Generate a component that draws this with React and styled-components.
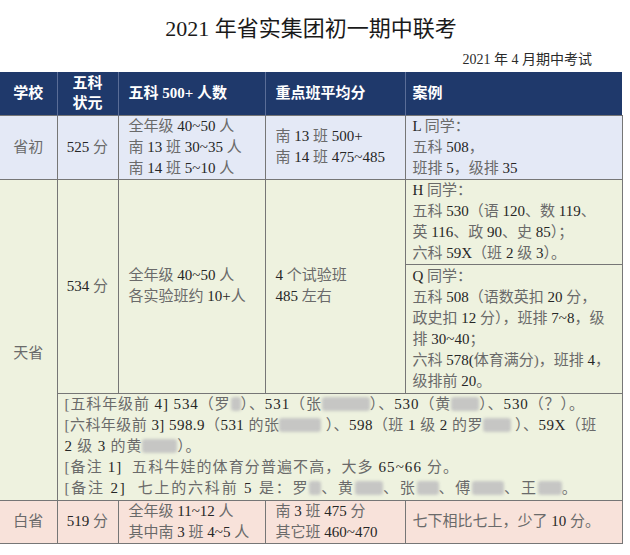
import React from "react";
import styled, { createGlobalStyle } from "styled-components";

const GlobalStyle = createGlobalStyle`
  html, body { margin: 0; padding: 0; background: #ffffff; }
  body { font-family: "Liberation Serif", "Noto Sans CJK SC", serif; }
`;

const Page = styled.div`
  width: 630px;
  height: 555px;
  overflow: hidden;
  background: #ffffff;
`;

const Title = styled.h1`
  margin: 0;
  padding-top: 15px;
  font-size: 22px;
  line-height: 28px;
  font-weight: 400;
  text-align: center;
  color: #1a1a1a;
  width: 622px;
`;

const Subtitle = styled.div`
  margin-top: 8px;
  width: 622px;
  box-sizing: border-box;
  padding-right: 30px;
  text-align: right;
  font-size: 14px;
  line-height: 18px;
  color: #2a2a2a;
`;

const Table = styled.table`
  margin-top: 3px;
  width: 622px;
  border-collapse: collapse;
  table-layout: fixed;
`;

const HeadCell = styled.th`
  background: #1f396b;
  color: #ffffff;
  font-size: 15px;
  line-height: 20px;
  font-weight: 700;
  text-align: ${(p) => p.$align || "left"};
  padding: 0 ${(p) => p.$pad ?? 10}px;
  border-left: 1px solid #5a6d97;
  white-space: nowrap;
  &:first-child { border-left: none; }
`;

const Row = styled.tr`
  height: ${(p) => p.$h}px;
  background: ${(p) => p.$bg};
`;

const Cell = styled.td`
  border: 1px solid #767676;
  font-size: 15px;
  line-height: 21px;
  color: #6a6a6a;
  text-align: ${(p) => p.$align || "left"};
  vertical-align: middle;
  padding: ${(p) => p.$top ?? 0}px 0 0 ${(p) => p.$pad ?? 10}px;
  white-space: nowrap;
  overflow: visible;
  &:first-child { border-left: none; }
`;

const Line = styled.div`
  white-space: pre;
  letter-spacing: ${(p) => p.$ls ?? 0}px;
`;

const Latin = styled.span`
  color: #262626;
`;

const Blur = styled.span`
  display: inline-block;
  width: ${(p) => p.$w}px;
  height: 14px;
  vertical-align: -2px;
  background: #c2c2c2;
  border-radius: 3px;
  filter: blur(1.6px);
  opacity: 0.9;
`;

const Col = styled.col`
  width: ${(p) => p.$w}px;
`;

function Rich({ text }) {
  return text
    .split(/([0-9A-Za-z.+~?\[\]\(\)]+)/)
    .map((s, i) =>
      /[0-9A-Za-z]/.test(s) ? <Latin key={i}>{s}</Latin> : <React.Fragment key={i}>{s}</React.Fragment>
    );
}

function Lines({ lines }) {
  return lines.map((entry, i) => {
    const obj = typeof entry === "object" && !Array.isArray(entry) ? entry : { parts: entry };
    const parts = Array.isArray(obj.parts) ? obj.parts : [obj.parts];
    return (
      <Line key={i} $ls={obj.ls}>
        {parts.map((p, j) =>
          typeof p === "number" ? <Blur key={j} $w={p} /> : <Rich key={j} text={p} />
        )}
      </Line>
    );
  });
}

const ROW1 = "#e4e9f6";
const ROW2 = "#eef2df";
const ROW3 = "#f8e2da";

export default function App() {
  return (
    <Page>
      <GlobalStyle />
      <Title>2021 年省实集团初一期中联考</Title>
      <Subtitle>2021 年 4 月期中考试</Subtitle>
      <Table>
        <colgroup>
          <Col $w={57} />
          <Col $w={61} />
          <Col $w={147} />
          <Col $w={140} />
          <Col $w={217} />
        </colgroup>
        <thead>
          <Row $h={43} $bg="#1f396b">
            <HeadCell $align="center" $pad={0}>学校</HeadCell>
            <HeadCell $align="center" $pad={0}>
              <Line>五科</Line>
              <Line>状元</Line>
            </HeadCell>
            <HeadCell>五科 500+ 人数</HeadCell>
            <HeadCell>重点班平均分</HeadCell>
            <HeadCell $pad={7}>案例</HeadCell>
          </Row>
        </thead>
        <tbody>
          <Row $h={64} $bg={ROW1}>
            <Cell $align="center" $pad={0}>省初</Cell>
            <Cell $align="center" $pad={0}><Rich text="525 分" /></Cell>
            <Cell>
              <Lines lines={["全年级 40~50 人", "南 13 班 30~35 人", "南 14 班 5~10 人"]} />
            </Cell>
            <Cell>
              <Lines lines={["南 13 班 500+", "南 14 班 475~485"]} />
            </Cell>
            <Cell $pad={7}>
              <Lines lines={["L 同学：", "五科 508，", "班排 5，级排 35"]} />
            </Cell>
          </Row>

          <Row $h={85} $bg={ROW2}>
            <Cell rowSpan={3} $align="center" $pad={0} $top={28}>天省</Cell>
            <Cell rowSpan={2} $align="center" $pad={0}><Rich text="534 分" /></Cell>
            <Cell rowSpan={2}>
              <Lines lines={["全年级 40~50 人", "各实验班约 10+人"]} />
            </Cell>
            <Cell rowSpan={2}>
              <Lines lines={["4 个试验班", "485 左右"]} />
            </Cell>
            <Cell $pad={7}>
              <Lines
                lines={[
                  "H 同学：",
                  "五科 530（语 120、数 119、",
                  "英 116、政 90、史 85）；",
                  "六科 59X（班 2 级 3）。",
                ]}
              />
            </Cell>
          </Row>
          <Row $h={129} $bg={ROW2}>
            <Cell $pad={7}>
              <Lines
                lines={[
                  "Q 同学：",
                  "五科 508（语数英扣 20 分，",
                  "政史扣 12 分），班排 7~8，级",
                  "排 30~40；",
                  "六科 578(体育满分)，班排 4，",
                  "级排前 20。",
                ]}
              />
            </Cell>
          </Row>
          <Row $h={107} $bg={ROW2}>
            <Cell colSpan={4} $pad={7}>
              <Lines
                lines={[
                  { ls: 0.9, parts: ["[五科年级前 4] 534（罗", 10, "）、531（张", 48, "）、530（黄", 28, "）、530（？）。"] },
                  { ls: 0.45, parts: ["[六科年级前 3] 598.9（531 的张", 42, " ）、598（班 1 级 2 的罗", 28, " ）、59X（班"] },
                  { ls: 0.8, parts: ["2 级 3 的黄", 35, "）。"] },
                  { ls: 1.1, parts: ["[备注 1]  五科牛娃的体育分普遍不高，大多 65~66 分。"] },
                  { ls: 1.8, parts: ["[备注 2]  七上的六科前 5 是：罗", 12, "、黄", 28, "、张", 22, "、傅", 32, "、王", 24, "。"] },
                ]}
              />
            </Cell>
          </Row>

          <Row $h={42} $bg={ROW3}>
            <Cell $align="center" $pad={0}>白省</Cell>
            <Cell $align="center" $pad={0}><Rich text="519 分" /></Cell>
            <Cell>
              <Lines lines={["全年级 11~12 人", "其中南 3 班 4~5 人"]} />
            </Cell>
            <Cell>
              <Lines lines={["南 3 班 475 分", "其它班 460~470"]} />
            </Cell>
            <Cell $pad={7}>七下相比七上，少了 <Latin>10</Latin> 分。</Cell>
          </Row>
        </tbody>
      </Table>
    </Page>
  );
}
